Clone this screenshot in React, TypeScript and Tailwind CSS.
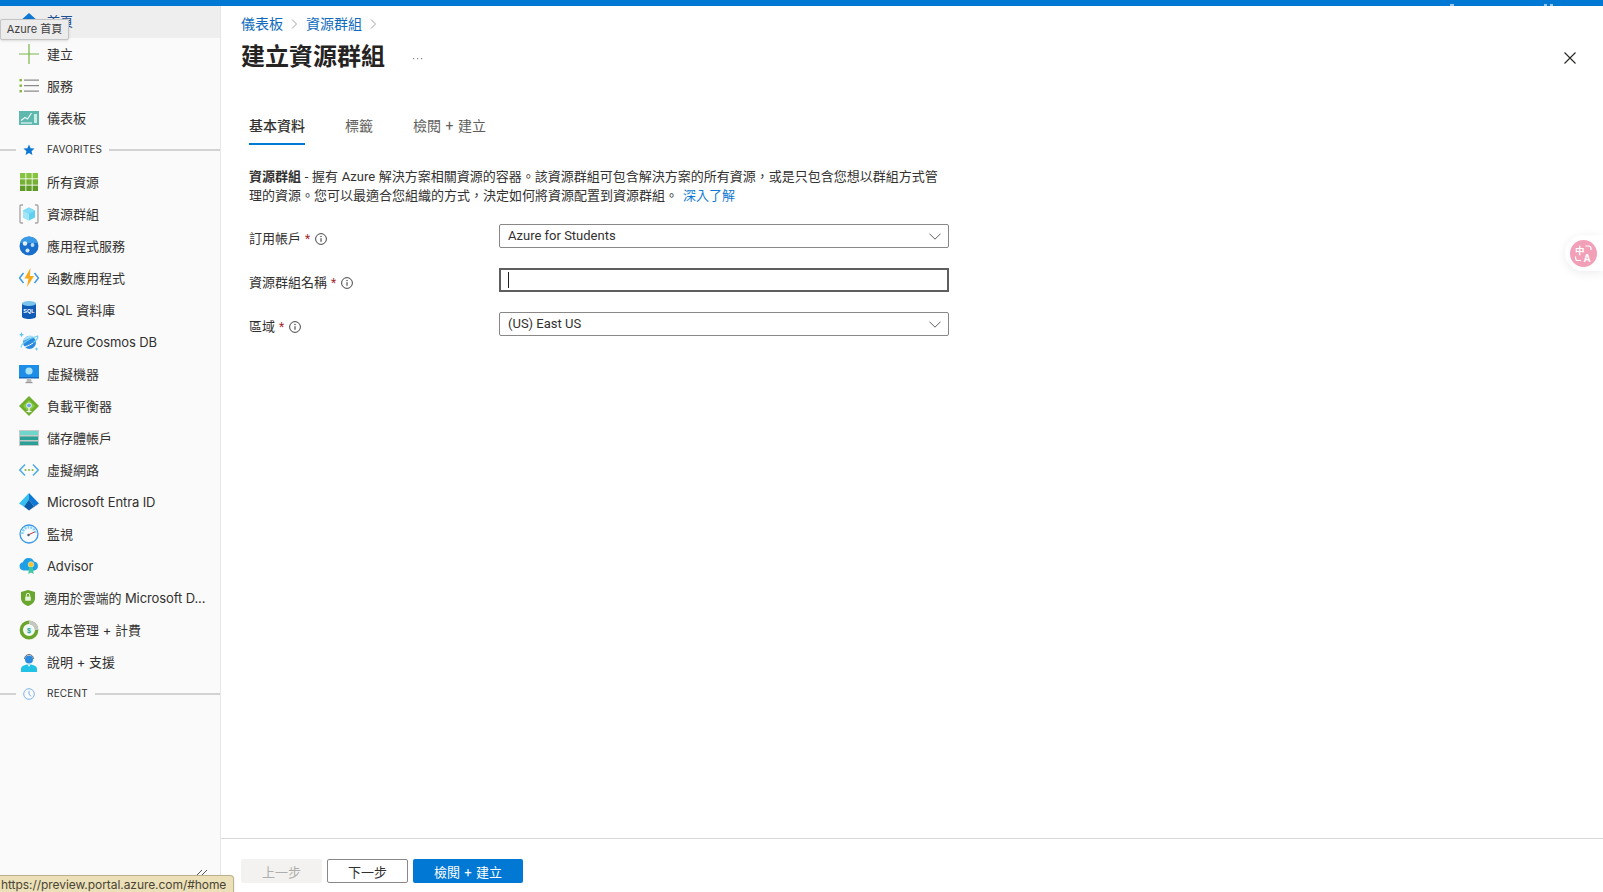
import React from "react";

const Plus = () => (
  <svg width="20" height="20" viewBox="0 0 20 20"><path d="M10 0v20M0 10h20" stroke="#7ab648" strokeWidth="1.2" /></svg>
);
const ListI = () => (
  <svg width="20" height="20" viewBox="0 0 20 20">
    <g fill="#7fb53a"><rect x="0.5" y="3" width="2.4" height="2.4" /><rect x="0.5" y="8.5" width="2.4" height="2.4" /><rect x="0.5" y="14" width="2.4" height="2.4" /></g>
    <path d="M5 4.2h15M5 9.7h15M5 15.2h15" stroke="#8c8c8c" strokeWidth="1.2" />
  </svg>
);
const Dash = () => (
  <svg width="20" height="20" viewBox="0 0 20 20">
    <rect x="0" y="3" width="20" height="14" fill="#5fb8ae" />
    <path d="M2 12.5l4-3 2.5 1.5 4-6" stroke="#eaf7f5" strokeWidth="1.2" fill="none" />
    <path d="M2 15h11" stroke="#eaf7f5" strokeWidth="1.2" />
    <rect x="15" y="6" width="3" height="9" fill="#c9ece7" />
  </svg>
);
const Star = () => (
  <svg width="12" height="12" viewBox="0 0 12 12"><path d="M6 .6l1.6 3.6 3.9.4-2.9 2.6.8 3.9L6 9.1l-3.4 2 .8-3.9L.5 4.6l3.9-.4z" fill="#0f78d4" /></svg>
);
const Clock = () => (
  <svg width="12" height="12" viewBox="0 0 12 12" fill="none"><circle cx="6" cy="6" r="5.3" stroke="#7db5ea" strokeWidth="1" /><path d="M6 2.8V6l2 2.4" stroke="#5c9fe0" strokeWidth="0.8" /></svg>
);
const Grid = () => (
  <svg width="20" height="20" viewBox="0 0 20 20">
    {[1, 7.3, 13.6].flatMap((y, j) =>
      [1, 7.3, 13.6].map((x, i) => <rect key={`${i}${j}`} x={x} y={y} width="5.4" height="5.4" fill={j === 0 ? "#86c440" : j === 1 ? "#76b034" : "#5e9a26"} />)
    )}
  </svg>
);
const ResGroup = () => (
  <svg width="20" height="20" viewBox="0 0 20 20">
    <path d="M4 1H2.200Q1 1 1 2.200v15.600Q1 19 2.200 19H4M16 1h1.800Q19 1 19 2.200v15.600q0 1.200-1.200 1.200H16" stroke="#a3a3a3" strokeWidth="1.300" fill="none" />
    <path d="M10 3.500l6 3v7l-6 3-6-3v-7z" fill="#5ed0f2" />
    <path d="M10 9.800v6.700l-6-3v-7z" fill="#a2e5f8" />
    <path d="M10 3.500l6 3-6 3.300-6-3.300z" fill="#83dcf6" />
  </svg>
);
const AppSvc = () => (
  <svg width="20" height="20" viewBox="0 0 20 20">
    <circle cx="10" cy="10" r="9.500" fill="#1b6fcc" />
    <path d="M1 7a9.500 9.500 0 0 1 18 0z" fill="#3a9ae6" />
    <circle cx="6" cy="7.500" r="2.200" fill="#e6f2fc" />
    <circle cx="13.500" cy="9" r="1.900" fill="#bfe0f8" />
    <circle cx="8.500" cy="14.500" r="2" fill="#d0e8fa" />
  </svg>
);
const Func = () => (
  <svg width="20" height="20" viewBox="0 0 20 20">
    <path d="M4.500 5L.5 10l4 5M15.500 5l4 5-4 5" stroke="#3a9ae6" strokeWidth="1.500" fill="none" />
    <path d="M11.500 0L5.500 10.500h4L8 19l7-11h-4.200z" fill="#f7a81b" />
  </svg>
);
const Sql = () => (
  <svg width="20" height="20" viewBox="0 0 20 20">
    <path d="M3 3.500v13c0 1.500 3 2.500 7 2.500s7-1 7-2.500v-13z" fill="#0f5bb5" />
    <ellipse cx="10" cy="3.500" rx="7" ry="2.500" fill="#7cc4ee" />
    <text x="10" y="13" textAnchor="middle" fontSize="5.500" fontWeight="700" fill="#fff" fontFamily="Liberation Sans, sans-serif">SQL</text>
  </svg>
);
const Cosmos = () => (
  <svg width="20" height="20" viewBox="0 0 20 20">
    <circle cx="10.500" cy="10.500" r="6.500" fill="#2a8ae0" />
    <path d="M4.500 9a6.500 6.500 0 0 1 11-3.500c-3 .2-7 1.500-11 3.500z" fill="#a7dcf8" />
    <path d="M2.500 15.500C1 13 8 7 18.500 4c1 1.500-1 4-4 6.500" stroke="#6fd1f5" strokeWidth="1.300" fill="none" />
    <path d="M3 13.500c-.8 2.500 5 1.500 11-2.500" stroke="#fff" strokeWidth="1" fill="none" />
    <path d="M2.500 0l.7 2 2 .7-2 .7-.7 2-.7-2-2-.7 2-.7zM17.500 15l.5 1.500 1.500.5-1.500.5-.5 1.500-.5-1.500-1.500-.5 1.500-.5z" fill="#55c3ee" />
  </svg>
);
const Vm = () => (
  <svg width="20" height="20" viewBox="0 0 20 20">
    <rect x="0" y="1" width="20" height="13" fill="#1c8ee8" />
    <rect x="0" y="13" width="20" height="1.500" fill="#0f68bf" />
    <circle cx="10" cy="7" r="3.600" fill="#a7e2f8" />
    <path d="M8 14.500h4l.6 3.500H7.400z" fill="#bdbdbd" />
    <rect x="6.500" y="18" width="7" height="1.200" fill="#9a9a9a" />
  </svg>
);
const Lb = () => (
  <svg width="20" height="20" viewBox="0 0 20 20">
    <path d="M10 0l10 10-10 10L0 10z" fill="#6fae2d" />
    <path d="M10 4l6 6-6 6-6-6z" fill="#8ccb45" />
    <circle cx="10" cy="9.500" r="2.400" fill="#6ea8e8" stroke="#eaf3fb" strokeWidth="1" />
    <path d="M10 12v4.500M7.500 15.500h5" stroke="#fff" strokeWidth="1.200" />
  </svg>
);
const Storage = () => (
  <svg width="20" height="20" viewBox="0 0 20 20">
    <rect x="0" y="2" width="20" height="16" fill="#c8c8c8" />
    <rect x="1" y="3" width="18" height="4" fill="#6fd6cb" />
    <rect x="1" y="8.500" width="18" height="3.500" fill="#2aa096" />
    <rect x="1" y="13.500" width="18" height="3.500" fill="#2aa096" />
  </svg>
);
const Vnet = () => (
  <svg width="20" height="20" viewBox="0 0 20 20">
    <path d="M6 4.500L.8 10 6 15.500M14 4.500l5.200 5.500-5.200 5.500" stroke="#4aa8ec" strokeWidth="1.400" fill="none" />
    <g fill="#7fb53a"><circle cx="6.500" cy="10" r="1" /><circle cx="10" cy="10" r="1" /><circle cx="13.500" cy="10" r="1" /></g>
  </svg>
);
const Entra = () => (
  <svg width="20" height="20" viewBox="0 0 20 20">
    <path d="M10 1L0 11.500l5 3 5-7z" fill="#36c0f0" />
    <path d="M10 1l10 10.500-5 3-5-7z" fill="#0f78d4" />
    <path d="M0 11.500l10 6.500-5-3.500z" fill="#1fa4e4" />
    <path d="M10 7.500l5 7-5 4-5-4z" fill="#0b5cab" />
    <path d="M10 18.500l5-4 5-3z" fill="#0a3f85" />
  </svg>
);
const Monitor = () => (
  <svg width="20" height="20" viewBox="0 0 20 20" fill="none">
    <circle cx="10" cy="10" r="9" fill="#f4fafe" stroke="#3b95e6" strokeWidth="1.300" />
    <path d="M3.500 10a6.500 6.500 0 0 1 13-.5" stroke="#7fd0f2" strokeWidth="2.500" strokeDasharray="1.800 1.100" />
    <path d="M9 11l6.500-3" stroke="#d6352e" strokeWidth="1" />
    <circle cx="9.500" cy="11" r="1.200" fill="#44586e" />
  </svg>
);
const Advisor = () => (
  <svg width="20" height="20" viewBox="0 0 20 20">
    <path d="M4.500 14.500a4.200 4.200 0 0 1-.6-8.300A6 6 0 0 1 15 5.500a4.600 4.600 0 0 1 .5 9z" fill="#1f9fe6" />
    <circle cx="12" cy="8.500" r="2.800" fill="#f5c227" stroke="#e0f1fb" strokeWidth="0.600" />
    <path d="M10.300 11l-1 7 2.700-1.500 2.700 1.500-1-7z" fill="#3fc7a0" />
  </svg>
);
const Defender = () => (
  <svg width="14" height="16" viewBox="0 0 14 16">
    <path d="M7 0l7 2v6c0 4-3 6.700-7 8-4-1.300-7-4-7-8V2z" fill="#68a62e" />
    <rect x="4.200" y="6.500" width="5.600" height="4.200" rx="0.500" fill="#e8f4d8" />
    <path d="M5.300 6.500V5a1.700 1.700 0 0 1 3.400 0v1.500" stroke="#e8f4d8" strokeWidth="1" fill="none" />
  </svg>
);
const Cost = () => (
  <svg width="20" height="20" viewBox="0 0 20 20" fill="none">
    <circle cx="10" cy="10" r="7.700" stroke="#6ba52c" strokeWidth="3.400" />
    <path d="M10 2.300a7.700 7.700 0 0 1 7.700 7.700" stroke="#c6c6c6" strokeWidth="3.400" />
    <circle cx="10" cy="10" r="4.200" fill="#e8f8f5" />
    <text x="10" y="12.700" textAnchor="middle" fontSize="7" fontWeight="700" fill="#2aa096" fontFamily="Liberation Sans, sans-serif">$</text>
  </svg>
);
const Help = () => (
  <svg width="20" height="20" viewBox="0 0 20 20" fill="none">
    <path d="M5.500 7a4.500 4.500 0 0 1 9 0" stroke="#6a6a6a" strokeWidth="1" />
    <circle cx="10" cy="7.500" r="4" fill="#2a8ae0" />
    <path d="M2 20v-3c0-3 3.500-4.500 8-4.500s8 1.500 8 4.500v3z" fill="#22c1e6" />
    <path d="M8.500 12.500L10 15l1.500-2.500z" fill="#e8f8fc" />
  </svg>
);
const Info = () => (
  <svg width="12" height="12" viewBox="0 0 12 12" fill="none" className="shrink-0">
    <circle cx="6" cy="6" r="5.400" stroke="#323130" strokeWidth="0.900" />
    <path d="M6 5.200v3.600" stroke="#323130" strokeWidth="1" />
    <circle cx="6" cy="3.500" r="0.650" fill="#323130" />
  </svg>
);
const Chevron = () => (
  <svg width="12" height="7" viewBox="0 0 12 7" fill="none" className="shrink-0"><path d="M.5.700L6 6.200 11.500.700" stroke="#605e5c" strokeWidth="1" /></svg>
);
const Crumb = () => (
  <svg width="7" height="10" viewBox="0 0 7 10" fill="none" className="shrink-0"><path d="M1 .5L5.500 5 1 9.500" stroke="#a19f9d" strokeWidth="1" /></svg>
);
const Translate = () => (
  <svg width="27" height="27" viewBox="0 0 27 27" fill="none">
    <circle cx="13.500" cy="13.500" r="13.500" fill="#f29fb8" />
    <text x="5" y="14" fontSize="9.500" fontWeight="700" fill="#fff" fontFamily="Noto Sans CJK TC, sans-serif">中</text>
    <text x="13.500" y="22" fontSize="10" fontWeight="700" fill="#fff" fontFamily="Liberation Sans, sans-serif">A</text>
    <path d="M15.500 6h3a2.500 2.500 0 0 1 2.500 2.500V10M5.500 16.500v1.500A2.500 2.500 0 0 0 8 20.500h3" stroke="#fff" strokeWidth="1.200" />
  </svg>
);

const items: [React.ReactNode, string][] = [
  [<Grid />, "所有資源"],
  [<ResGroup />, "資源群組"],
  [<AppSvc />, "應用程式服務"],
  [<Func />, "函數應用程式"],
  [<Sql />, "SQL 資料庫"],
  [<Cosmos />, "Azure Cosmos DB"],
  [<Vm />, "虛擬機器"],
  [<Lb />, "負載平衡器"],
  [<Storage />, "儲存體帳戶"],
  [<Vnet />, "虛擬網路"],
  [<Entra />, "Microsoft Entra ID"],
  [<Monitor />, "監視"],
  [<Advisor />, "Advisor"],
];

function Row({ icon, label }: { icon: React.ReactNode; label: string }) {
  const latin = /^[A-Za-z ]+$/.test(label);
  return (
    <div className={latin ? "flex h-8 items-center pl-[19px] text-[13px] tracking-[-0.1px] text-[#323130]" : "flex h-8 items-center pl-[19px] text-[13px] text-[#323130]"}>
      <span className="flex h-5 w-5 shrink-0 items-center justify-center">{icon}</span>
      <span className="ml-2 pt-[2px]">{label}</span>
    </div>
  );
}

function Section({ icon, label }: { icon: React.ReactNode; label: string }) {
  return (
    <div className="flex h-8 items-center text-[10px] tracking-[0.2px] text-[#323130]">
      <div className="h-[2px] w-4 bg-[#d2d2d2]" />
      <span className="ml-[7px] flex w-3 justify-center">{icon}</span>
      <span className="ml-3 pb-[2px]">{label}</span>
      <div className="ml-[7px] h-[2px] flex-1 bg-[#d2d2d2]" />
    </div>
  );
}

function Field({ label, children, mb }: { label: string; children: React.ReactNode; mb?: boolean }) {
  return (
    <div className={mb ? "mb-5 flex h-6 items-center" : "flex h-6 items-center"}>
      <div className="flex w-[250px] items-center pt-[6px] text-[13px] text-[#323130]">
        <span>{label}</span>
        <span className="ml-1 text-[12px] text-[#a4262c]">*</span>
        <span className="ml-[5px]"><Info /></span>
      </div>
      {children}
    </div>
  );
}

function Select({ value }: { value: string }) {
  return (
    <div className="flex h-6 w-[450px] items-center justify-between rounded-[2px] border border-[#8a8886] pl-2 pr-[7px] text-[13px] text-[#323130]">
      <span>{value}</span>
      <Chevron />
    </div>
  );
}

export default function App() {
  return (
    <div className="relative flex h-[892px] w-[1603px] flex-col overflow-hidden bg-white font-['Inter','Noto_Sans_CJK_TC',sans-serif]">
      <div className="h-[6px] shrink-0 bg-[#0078d4]" />
      <div className="flex min-h-0 flex-1">
        <aside className="w-[221px] shrink-0 border-r border-[#e6e6e6] bg-[#fafafa]">
          <div className="flex h-8 items-center bg-[#eeeeee] pl-[19px] text-[13px] text-[#1f4f8f]">
            <span className="flex h-5 w-5 items-center justify-center">
              <svg width="20" height="18" viewBox="0 0 20 18"><path d="M10 0L0 9h3v9h14V9h3z" fill="#0f78d4" /></svg>
            </span>
            <span className="ml-2">首頁</span>
          </div>
          <Row icon={<Plus />} label="建立" />
          <Row icon={<ListI />} label="服務" />
          <Row icon={<Dash />} label="儀表板" />
          <Section icon={<Star />} label="FAVORITES" />
          {items.map(([icon, label]) => (
            <Row key={label} icon={icon} label={label} />
          ))}
          <div className="flex h-8 items-center pl-[21px] text-[13px] tracking-[-0.1px] text-[#323130]">
            <span className="shrink-0"><Defender /></span>
            <span className="ml-[9px] whitespace-nowrap pt-[2px]">適用於雲端的 Microsoft D...</span>
          </div>
          <Row icon={<Cost />} label="成本管理 + 計費" />
          <Row icon={<Help />} label="說明 + 支援" />
          <Section icon={<Clock />} label="RECENT" />
        </aside>

        <main className="flex min-w-0 flex-1 flex-col font-['Roboto','Noto_Sans_CJK_TC',sans-serif]">
          <div className="flex-1">
            <div className="flex h-9 items-center gap-2 pl-5 text-[14px] text-[#0f6cbd]">
              <span>儀表板</span>
              <Crumb />
              <span>資源群組</span>
              <Crumb />
            </div>
            <div className="flex h-[30px] items-center pl-5 pr-[27px]">
              <h1 className="text-[24px] font-semibold leading-[30px] text-[#252423]">建立資源群組</h1>
              <svg className="ml-7 mt-1" width="10" height="2" viewBox="0 0 10 2"><g fill="#8a8886"><rect x="0" y="0" width="1.200" height="1.200" /><rect x="4" y="0" width="1.200" height="1.200" /><rect x="8" y="0" width="1.200" height="1.200" /></g></svg>
              <svg className="ml-auto mt-[2px]" width="12" height="12" viewBox="0 0 12 12" fill="none"><path d="M.5.500l11 11M11.500.500l-11 11" stroke="#252423" strokeWidth="1.100" /></svg>
            </div>
            <div className="mt-[44px] flex pl-[28px] text-[14px] text-[#605e5c] [word-spacing:1px]">
              <div className="border-b-2 border-[#0078d4] pb-[6px] font-medium text-[#323130]">基本資料</div>
              <div className="ml-[40px]">標籤</div>
              <div className="ml-[40px]">檢閱 + 建立</div>
            </div>
            <div className="pl-[28px]">
              <p className="mt-[23px] w-[695px] text-[13px] leading-[18.500px] text-[#323130] [word-spacing:0.5px]">
                <b className="font-semibold">資源群組</b> - 握有 Azure 解決方案相關資源的容器。該資源群組可包含解決方案的所有資源，或是只包含您想以群組方式管理的資源。您可以最適合您組織的方式，決定如何將資源配置到資源群組。
                <span className="ml-[5px] text-[#0f78d4]">深入了解</span>
              </p>
              <div className="mt-[19px]">
                <Field label="訂用帳戶" mb><Select value="Azure for Students" /></Field>
                <Field label="資源群組名稱" mb>
                  <div className="flex h-6 w-[450px] items-center border-2 border-[#605e5c] pl-[7px]">
                    <div className="h-[16px] w-px bg-[#201f1e]" />
                  </div>
                </Field>
                <Field label="區域"><Select value="(US) East US" /></Field>
              </div>
            </div>
          </div>
          <footer className="flex h-[54px] shrink-0 gap-[5px] border-t border-[#d6d6d6] pl-5 pt-5 text-[13px] [word-spacing:1px]">
            <div className="flex h-6 w-[81px] items-center justify-center rounded-[2px] bg-[#f3f2f1] pt-1 text-[#b0aeac]">上一步</div>
            <div className="flex h-6 w-[81px] items-center justify-center rounded-[2px] border border-[#8a8886] pt-1 text-[#323130]">下一步</div>
            <div className="flex h-6 w-[110px] items-center justify-center rounded-[2px] bg-[#0078d4] pt-1 text-white">檢閱 + 建立</div>
          </footer>
        </main>
      </div>

      <div className="absolute left-0 top-[19px] flex h-[21px] w-[69px] items-center justify-center rounded-[2px] border border-[#c4c4c4] bg-[#ececec] text-[11px] text-[#404040] shadow-sm">Azure 首頁</div>
      <svg className="absolute left-[195px] top-[869px]" width="13" height="7" viewBox="0 0 13 7" fill="none"><path d="M1 7l6-6M6 7l6-6" stroke="#555" strokeWidth="1" /></svg>
      <div className="absolute left-0 top-[875px] flex h-[17px] w-[234px] items-center rounded-tr-[4px] border-r border-t border-[#bdb28f] bg-[#ece0b8] pl-px pt-[2px] text-[12px] tracking-[-0.06px] text-[#4a4534] shadow-sm">https://preview.portal.azure.com/#home</div>
      <div className="absolute right-0 top-[235px] flex h-[36px] w-[38px] items-center rounded-l-[18px] bg-white pl-[5px] shadow-[0_2px_10px_rgba(0,0,0,0.08)]">
        <Translate />
      </div>
      <div className="absolute left-[1450px] top-[4px] h-[2px] w-[4px] bg-[#9cc7ec]" />
      <div className="absolute left-[1544px] top-[4px] h-[2px] w-[3px] bg-[#9cc7ec]" />
      <div className="absolute left-[1550px] top-[4px] h-[2px] w-[3px] bg-[#9cc7ec]" />
    </div>
  );
}
